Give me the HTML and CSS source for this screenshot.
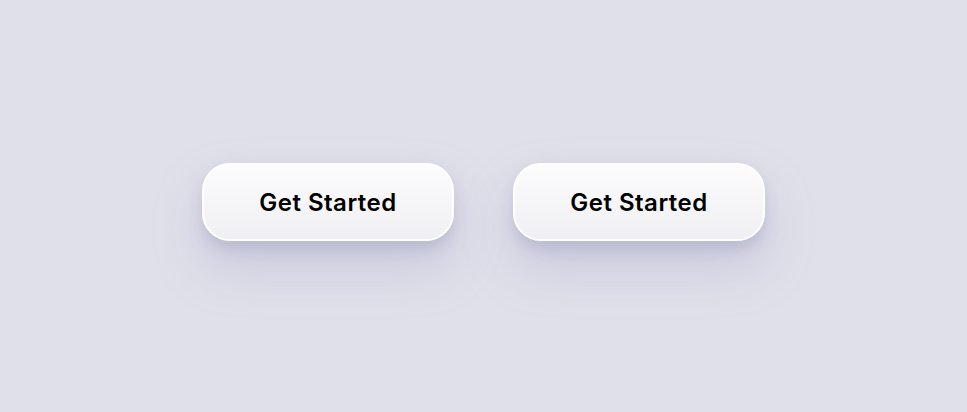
FILE: index.html
```html
<!DOCTYPE html>
<html lang="en">
<head>
  <meta charset="UTF-8" />
  <title>Get Started</title>
  <link rel="stylesheet" href="styles.css">
</head>
<body>
  <main class="stage">
    <button class="start-btn">Get Started</button>
    <button class="start-btn">Get Started</button>
  </main>
</body>
</html>
```

FILE: styles.css
```css
html, body {
  margin: 0;
  height: 100%;
}
body {
  background: #e0e0ea;
  font-family: Inter, "Noto Sans", sans-serif;
}
.stage {
  height: 100%;
  display: flex;
  justify-content: center;
  align-items: center;
  gap: 59px;
  padding-bottom: 8px;
  box-sizing: border-box;
}
.start-btn {
  width: 252px;
  height: 78px;
  border: 2px solid #ffffff;
  border-radius: 28px;
  background: linear-gradient(180deg, #fcfcfd 0%, #f0f0f4 100%);
  color: #000000;
  font-family: inherit;
  font-size: 24px;
  font-weight: 600;
  letter-spacing: 0.5px;
  cursor: pointer;
  box-shadow:
    0 8px 14px rgba(145, 145, 180, 0.30),
    0 26px 48px rgba(155, 155, 195, 0.34);
}
```
